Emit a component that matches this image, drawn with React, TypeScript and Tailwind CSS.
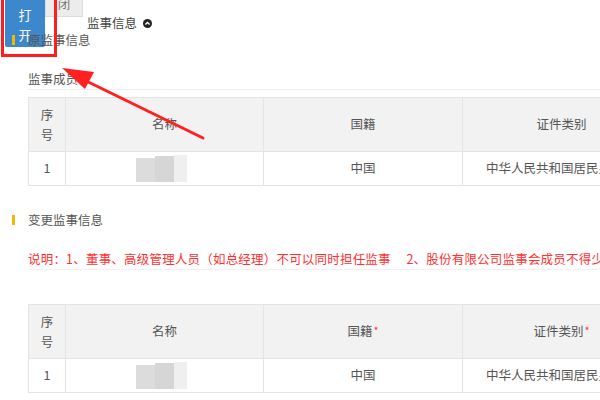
import React from 'react';

const COLS = [37, 198, 199, 198];

function Blur() {
  return (
    <div className="flex items-end justify-center pr-[6px]">
      <div className="w-[19px] h-[24px] bg-[#dcdcdc]" />
      <div className="w-[19px] h-[26px] bg-[#d6d6d6]" />
      <div className="w-[13px] h-[27px] bg-[#efefef]" />
    </div>
  );
}

function MemberTable({ required }: { required?: boolean }) {
  const star = required ? <span className="text-[#ff4040] text-[11px] align-top ml-[1px]">*</span> : null;
  return (
    <div className="ml-[28px] overflow-hidden">
      <table className="table-fixed border-collapse w-[632px] text-[12.5px] text-[#555]">
        <colgroup>
          {COLS.map((w, i) => (
            <col key={i} style={{ width: w }} />
          ))}
        </colgroup>
        <thead>
          <tr className="h-[54px] bg-[#f2f2f2]">
            <th className="border border-[#e4e4e4] font-normal leading-[20px] text-center">序<br />号</th>
            <th className="border border-[#e4e4e4] font-normal text-center">名称</th>
            <th className="border border-[#e4e4e4] font-normal text-center">国籍{star}</th>
            <th className="border border-[#e4e4e4] font-normal text-center">证件类别{star}</th>
          </tr>
        </thead>
        <tbody>
          <tr className="h-[34px]">
            <td className="border border-[#e4e4e4] text-center">1</td>
            <td className="border border-[#e4e4e4]"><Blur /></td>
            <td className="border border-[#e4e4e4] text-center">中国</td>
            <td className="border border-[#e4e4e4] pl-[23px] whitespace-nowrap overflow-hidden">中华人民共和国居民身份证</td>
          </tr>
        </tbody>
      </table>
    </div>
  );
}

function SectionTitle({ children }: { children: React.ReactNode }) {
  return (
    <div className="relative flex items-center h-[18px] pl-[12px]">
      <span className="w-[3px] h-[10px] bg-[#f5b800]" />
      <span className="ml-[13px] text-[12.5px] text-[#555] leading-none">{children}</span>
    </div>
  );
}

export default function App() {
  return (
    <div className="relative w-[600px] h-[400px] overflow-hidden bg-white font-['Noto_Sans_CJK_SC',sans-serif]">
      {/* 打开 button floating over the page */}
      <div className="absolute left-[5px] top-0 w-[40px] h-[47px] bg-[#3d88cc] rounded-b-[2px] flex flex-col items-center pt-[5px] text-white text-[13px] leading-[20px]">
        <span>打</span>
        <span>开</span>
      </div>

      {/* top bar */}
      <div className="flex items-start h-[31px] pl-[45px]">
        <div className="w-[38px] h-[17px] bg-[#ececec] border border-t-0 border-[#dcdcdc] flex justify-center">
          <span className="text-[12.5px] text-[#777] leading-none -mt-[2px]">闭</span>
        </div>
        <div className="ml-[4px] mt-[17px] flex items-center text-[12.5px] text-[#444] leading-none">
          监事信息
          <span className="ml-[6px] w-[9px] h-[9px] rounded-full bg-[#222] flex items-center justify-center">
            <svg width="7" height="7" viewBox="0 0 8 8">
              <path d="M1.6 5.2 L4 2.8 L6.4 5.2" fill="none" stroke="#fff" strokeWidth="1.6" />
            </svg>
          </span>
        </div>
      </div>

      <SectionTitle>原监事信息</SectionTitle>

      <div className="ml-[28px] mt-[21px] h-[20px] flex items-center border-b border-[#eeeeee] text-[12.5px] text-[#555] leading-none">
        监事成员
      </div>

      <div className="mt-[7px]">
        <MemberTable />
      </div>

      <div className="mt-[25px]">
        <SectionTitle>变更监事信息</SectionTitle>
      </div>

      <div className="ml-[28px] mt-[21px] h-[20px] flex items-center border-b border-[#f0f0f0] text-[12.5px] tracking-[0.2px] text-[#ff3030] leading-none whitespace-nowrap">
        说明：1、董事、高级管理人员（如总经理）不可以同时担任监事　 2、股份有限公司监事会成员不得少于3人
      </div>

      <div className="mt-[34px]">
        <MemberTable required />
      </div>

      {/* annotation: red box + arrow */}
      <div className="absolute left-[1px] -top-[4px] w-[56px] h-[61px] border-[3px] border-[#ff1e1e]" />
      <svg className="absolute left-0 top-0" width="600" height="400" viewBox="0 0 600 400">
        <line x1="203" y1="138" x2="74" y2="75" stroke="#ff2020" strokeWidth="3" strokeLinecap="round" />
        <polygon points="62,68 94,72 85,89" fill="#ff2020" />
      </svg>
    </div>
  );
}
